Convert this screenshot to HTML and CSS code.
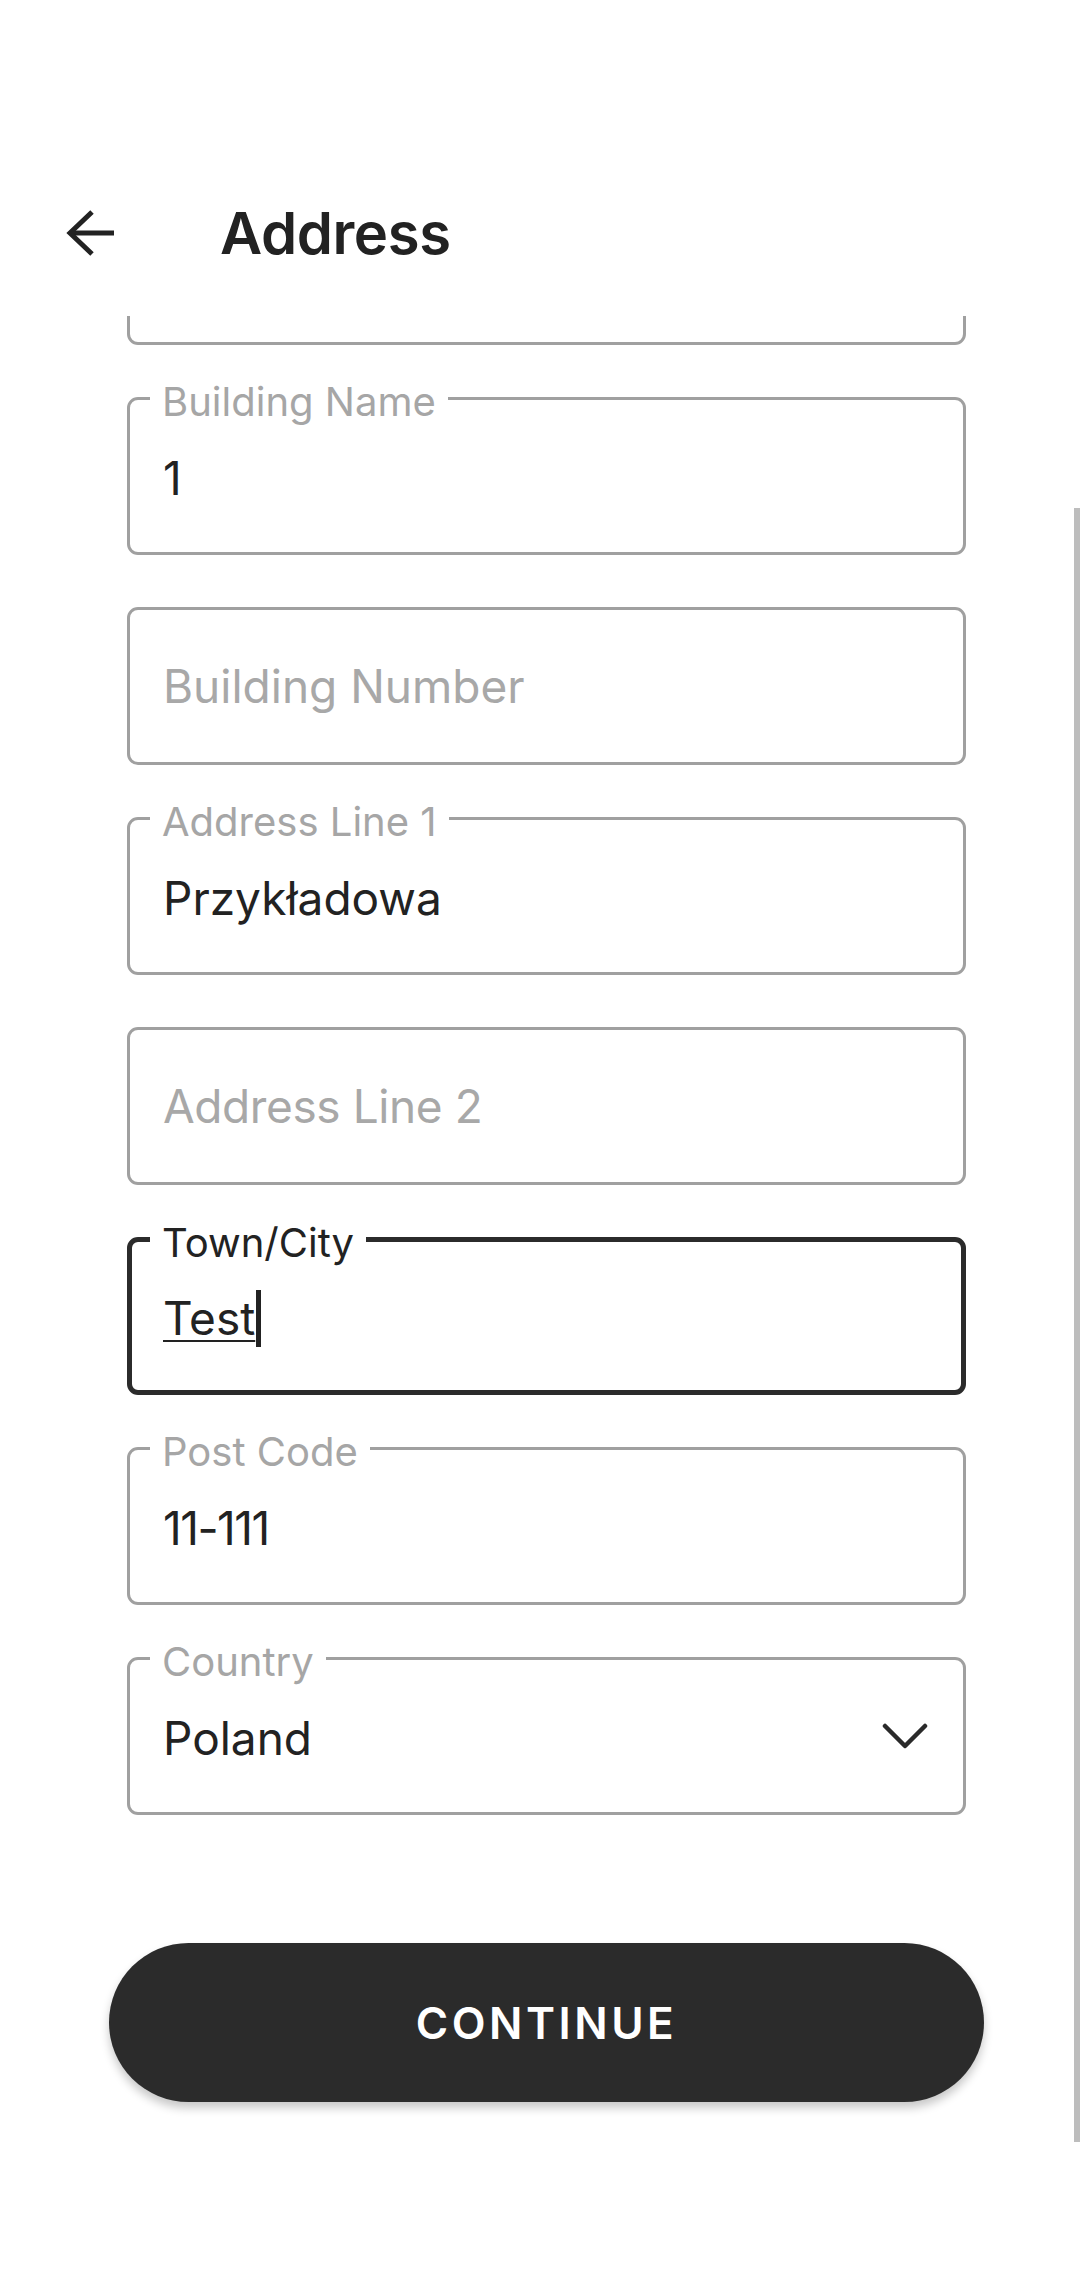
FILE: index.html
```html
<!DOCTYPE html>
<html lang="en">
<head>
<meta charset="utf-8">
<title>Address</title>
<link rel="stylesheet" href="styles.css">
</head>
<body>
<div class="screen">
  <header class="header">
    <div class="header-row">
      <button class="back" aria-label="Back">
        <svg width="48" height="48" viewBox="0 0 48 48">
          <line x1="5" y1="24" x2="48" y2="24" stroke="#222" stroke-width="5"/>
          <polyline points="26,3 4,24 26,45" fill="none" stroke="#222" stroke-width="5" stroke-linejoin="miter"/>
        </svg>
      </button>
      <h1 class="title">Address</h1>
    </div>
  </header>
  <main class="scroll">
    <div class="form">
      <div class="field filled" aria-hidden="true"></div>
      <div class="field filled">
        <span class="label">Building Name</span>
        <span class="value">1</span>
      </div>
      <div class="field">
        <span class="placeholder">Building Number</span>
      </div>
      <div class="field filled">
        <span class="label">Address Line 1</span>
        <span class="value">Przykładowa</span>
      </div>
      <div class="field">
        <span class="placeholder placeholder-tight">Address Line 2</span>
      </div>
      <div class="field filled focused">
        <span class="label">Town/City</span>
        <span class="value"><span class="composing">Test</span><span class="caret"></span></span>
      </div>
      <div class="field filled">
        <span class="label">Post Code</span>
        <span class="value digits">11-111</span>
      </div>
      <div class="field filled select">
        <span class="label">Country</span>
        <span class="value">Poland</span>
        <svg class="chevron" width="46" height="26" viewBox="0 0 46 26">
          <polyline points="3,3 23,23 43,3" fill="none" stroke="#2a2a2a" stroke-width="4.5" stroke-linecap="round" stroke-linejoin="round"/>
        </svg>
      </div>
      <button class="continue">CONTINUE</button>
    </div>
    <div class="scrollbar"></div>
  </main>
</div>
</body>
</html>
```
FILE: styles.css
```css
html, body {
  margin: 0;
  padding: 0;
  background: #ffffff;
}

body {
  font-family: Inter, "Noto Sans", sans-serif;
  color: #222222;
}

.screen {
  width: 1080px;
  height: 2280px;
  overflow: hidden;
  display: flex;
  flex-direction: column;
  background: #ffffff;
}

.header {
  height: 316px;
  flex: 0 0 316px;
  box-sizing: border-box;
  padding-top: 186px;
  background: #ffffff;
}

.header-row {
  height: 94px;
  display: flex;
  align-items: center;
  padding-left: 66px;
}

.back {
  width: 48px;
  height: 48px;
  padding: 0;
  margin: 0;
  border: 0;
  background: none;
  display: flex;
}

.title {
  margin: 0 0 0 106px;
  font-size: 58px;
  line-height: 1;
  font-weight: 600;
  color: #222222;
  letter-spacing: -0.4px;
}

.scroll {
  position: relative;
  flex: 1 1 auto;
  overflow: hidden;
}

.form {
  margin-top: -129px;
  display: flex;
  flex-direction: column;
  gap: 52px;
}

.field {
  position: relative;
  box-sizing: border-box;
  height: 158px;
  width: 839px;
  margin-left: 127px;
  border: 3px solid #a0a0a0;
  border-radius: 11px;
  padding: 0 35px 0 33px;
  display: flex;
  align-items: center;
}

.field.focused {
  border: 5px solid #2b2b2b;
  padding-left: 31px;
}

.label {
  position: absolute;
  top: -18px;
  left: 20px;
  padding: 0 12px;
  background: #ffffff;
  font-size: 40px;
  line-height: 1;
  color: #a6a6a6;
  white-space: nowrap;
}

.focused .label {
  top: -19px;
  left: 18px;
  color: #222222;
}

.value {
  display: flex;
  align-items: center;
  font-size: 46px;
  line-height: 1;
  color: #222222;
  padding-top: 4px;
}

.digits {
  letter-spacing: -1.5px;
}

.placeholder {
  font-size: 46px;
  line-height: 1;
  color: #a8a8a8;
}

.placeholder-tight {
  letter-spacing: -0.4px;
}

.composing {
  text-decoration: underline;
  text-decoration-thickness: 2px;
  text-underline-offset: 5px;
}

.caret {
  display: inline-block;
  width: 5px;
  height: 57px;
  margin-left: 1px;
  background: #222222;
}

.chevron {
  margin-left: auto;
}

.continue {
  margin: 76px 0 0 109px;
  width: 875px;
  height: 159px;
  border: 0;
  border-radius: 80px;
  background: #2b2b2b;
  color: #ffffff;
  font-family: Inter, "Noto Sans", sans-serif;
  font-size: 44px;
  font-weight: 600;
  letter-spacing: 3.5px;
  box-shadow: 0 6px 10px rgba(0, 0, 0, 0.22);
}

.scrollbar {
  position: absolute;
  top: 192px;
  right: 0;
  width: 6px;
  height: 1634px;
  background: #bdbdbd;
}
```
